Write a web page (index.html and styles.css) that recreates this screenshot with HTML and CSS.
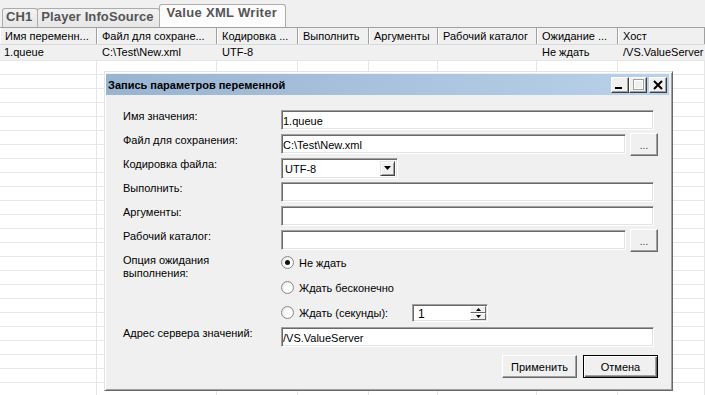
FILE: index.html
```html
<!DOCTYPE html>
<html lang="ru">
<head>
  <meta charset="UTF-8">
  <title>Value XML Writer</title>
  <link rel="stylesheet" href="styles.css">
</head>
<body>
  <div class="app">
    <!-- Tab strip -->
    <div class="tabs">
      <div class="tab">CH1</div>
      <div class="tab">Player InfoSource</div>
      <div class="tab active">Value XML Writer</div>
    </div>

    <!-- Variables grid -->
    <div class="grid">
      <div class="grid-row head">
        <div class="cell">Имя переменн...</div>
        <div class="cell">Файл для сохране...</div>
        <div class="cell">Кодировка ...</div>
        <div class="cell">Выполнить</div>
        <div class="cell">Аргументы</div>
        <div class="cell">Рабочий каталог</div>
        <div class="cell">Ожидание ...</div>
        <div class="cell">Хост</div>
      </div>
      <div class="grid-row data">
        <div class="cell">1.queue</div>
        <div class="cell">C:\Test\New.xml</div>
        <div class="cell">UTF-8</div>
        <div class="cell"></div>
        <div class="cell"></div>
        <div class="cell"></div>
        <div class="cell">Не ждать</div>
        <div class="cell">/VS.ValueServer</div>
      </div>
      <div class="grid-row filler">
        <div class="cell"></div>
        <div class="cell"></div>
        <div class="cell"></div>
        <div class="cell"></div>
        <div class="cell"></div>
        <div class="cell"></div>
        <div class="cell"></div>
        <div class="cell"></div>
      </div>
    </div>

    <!-- Edit dialog -->
    <div class="dialog">
      <div class="titlebar">
        <span class="title">Запись параметров переменной</span>
        <div class="caption-buttons">
          <span class="cap-btn">
            <svg width="16" height="14" viewBox="0 0 16 14"><rect x="3" y="9" width="7" height="2" fill="#000"/></svg>
          </span>
          <span class="cap-btn">
            <svg width="16" height="14" viewBox="0 0 16 14"><rect x="3.5" y="1.5" width="10" height="10" fill="none" stroke="#a0a0a0"/><rect x="4.5" y="2.5" width="8" height="8" fill="none" stroke="#fff"/></svg>
          </span>
          <span class="cap-btn close">
            <svg width="16" height="14" viewBox="0 0 16 14"><path d="M4 3 L12 11 M12 3 L4 11" stroke="#000" stroke-width="2"/></svg>
          </span>
        </div>
      </div>

      <div class="dialog-body">
        <div class="field">
          <label for="val-name">Имя значения:</label>
          <div class="control"><input class="textbox wide" id="val-name" type="text" value="1.queue"></div>
        </div>
        <div class="field">
          <label for="val-file">Файл для сохранения:</label>
          <div class="control">
            <input class="textbox short" id="val-file" type="text" value="C:\Test\New.xml">
            <button class="browse" type="button">...</button>
          </div>
        </div>
        <div class="field">
          <label>Кодировка файла:</label>
          <div class="control">
            <div class="combo">
              <span class="combo-value">UTF-8</span>
              <span class="combo-btn">
                <svg width="7" height="4" viewBox="0 0 7 4"><path d="M0 0 H7 L3.5 4 Z" fill="#000"/></svg>
              </span>
            </div>
          </div>
        </div>
        <div class="field">
          <label for="val-exec">Выполнить:</label>
          <div class="control"><input class="textbox wide" id="val-exec" type="text"></div>
        </div>
        <div class="field">
          <label for="val-args">Аргументы:</label>
          <div class="control"><input class="textbox wide" id="val-args" type="text"></div>
        </div>
        <div class="field">
          <label for="val-dir">Рабочий каталог:</label>
          <div class="control">
            <input class="textbox short" id="val-dir" type="text">
            <button class="browse" type="button">...</button>
          </div>
        </div>
        <div class="field options">
          <label>Опция ожидания<br>выполнения:</label>
          <div class="radios">
            <div class="radio-row"><span class="radio checked"></span><span>Не ждать</span></div>
            <div class="radio-row"><span class="radio"></span><span>Ждать бесконечно</span></div>
            <div class="radio-row">
              <span class="radio"></span><span class="radio-text">Ждать (секунды):</span>
              <div class="spin">
                <span class="spin-value">1</span>
                <span class="spin-btns">
                  <span class="spin-btn"><svg width="5" height="3" viewBox="0 0 5 3"><path d="M0 3 H5 L2.5 0 Z" fill="#000"/></svg></span>
                  <span class="spin-btn"><svg width="5" height="3" viewBox="0 0 5 3"><path d="M0 0 H5 L2.5 3 Z" fill="#000"/></svg></span>
                </span>
              </div>
            </div>
          </div>
        </div>
        <div class="field">
          <label for="val-host">Адрес сервера значений:</label>
          <div class="control"><input class="textbox wide" id="val-host" type="text" value="/VS.ValueServer"></div>
        </div>
        <div class="dialog-buttons">
          <button class="btn" type="button">Применить</button>
          <button class="btn default" type="button">Отмена</button>
        </div>
      </div>
    </div>
  </div>
</body>
</html>
```

FILE: styles.css
```css
body {
  margin: 0;
  font-family: "Liberation Sans", Arial, sans-serif;
  font-size: 11px;
  color: #000;
  background: #fff;
  overflow: hidden;
}
.app {
  position: relative;
  width: 705px;
  height: 395px;
  overflow: hidden;
}

/* Tabs */
.tabs {
  display: flex;
  align-items: flex-end;
  height: 27px;
  padding-left: 2px;
  background: #f0f0f0;
  border-bottom: 1px solid #a0a0a0;
}
.tab {
  height: 18px;
  line-height: 16px;
  padding: 0 5px 0 3px;
  border: 1px solid #acacac;
  border-bottom: none;
  border-radius: 3px 3px 0 0;
  background: linear-gradient(#f2f2f2, #e6e6e6);
  font-size: 13px;
  font-weight: bold;
  letter-spacing: 0.1px;
  color: #555;
}
.tab + .tab {
  margin-left: -1px;
}
.tab.active {
  height: 22px;
  line-height: 15px;
  padding: 0 8px 0 7px;
  letter-spacing: 0.3px;
  background: #fcfcfc;
}

/* Grid */
.grid-row {
  display: grid;
  grid-template-columns: 97px 120px 81px 71px 69px 99px 81px 1fr;
}
.cell {
  padding-left: 5px;
  white-space: nowrap;
  overflow: hidden;
}
.head {
  height: 16px;
  background: #f0f0f0;
  border-bottom: 1px solid #d9d9d9;
}
.head .cell {
  line-height: 16px;
  border-right: 1px solid #a0a0a0;
  box-shadow: inset 1px 0 #fff;
}
.data {
  height: 15px;
  background: #f0f0f0;
  border-bottom: 1px solid #e6e6e6;
}
.data .cell {
  line-height: 15px;
}
.data .cell:first-child {
  padding-left: 4px;
}
.filler {
  height: 340px;
  background: repeating-linear-gradient(#fff 0 13px, #e8e8e8 13px 14px);
}
.filler .cell {
  border-right: 1px solid #e6e6e6;
}

/* Dialog */
.dialog {
  position: absolute;
  left: 104px;
  top: 71px;
  width: 569px;
  height: 320px;
  box-sizing: border-box;
  padding: 2px 3px 2px 1px;
  background: #f0f0f0;
  border: 1px solid;
  border-color: #e3e3e3 #696969 #696969 #e3e3e3;
  box-shadow: inset 1px 1px #fff, inset -1px -1px #a0a0a0;
}
.titlebar {
  display: flex;
  align-items: center;
  justify-content: space-between;
  height: 21px;
  padding: 0 2px 0 2px;
  background: linear-gradient(to right, #99b4d1, #b9d1ea);
}
.title {
  font-weight: bold;
}
.caption-buttons {
  display: flex;
}
.cap-btn {
  display: block;
  width: 16px;
  height: 14px;
  background: #f0f0f0;
  border: 1px solid;
  border-color: #fff #404040 #404040 #fff;
  box-shadow: inset -1px -1px #a0a0a0;
}
.cap-btn svg {
  display: block;
}
.cap-btn.close {
  margin-left: 2px;
}

.dialog-body {
  padding: 13px 0 0 17px;
}
.field {
  display: grid;
  grid-template-columns: 158px 377px;
  height: 24px;
  align-items: center;
}
.field > label {
  align-self: start;
  padding-top: 2px;
  line-height: 13px;
}
.control {
  display: flex;
  align-items: center;
  gap: 4px;
}
.textbox {
  height: 20px;
  box-sizing: border-box;
  margin: 0;
  padding: 1px 0 0 1px;
  border: 1px solid;
  border-color: #a0a0a0 #fff #fff #a0a0a0;
  box-shadow: inset 1px 1px #696969, inset -1px -1px #e3e3e3;
  background: #fff;
  font: inherit;
  color: #000;
  outline: none;
}
.textbox.wide {
  width: 373px;
}
.textbox.short {
  width: 345px;
}
.browse {
  width: 28px;
  height: 23px;
  margin: 0;
  padding: 2px 0 0;
  border: 1px solid;
  border-color: #fff #696969 #696969 #fff;
  box-shadow: inset -1px -1px #a0a0a0;
  background: #f0f0f0;
  font: inherit;
  font-size: 10px;
  color: #4a2a6a;
}

.combo {
  display: flex;
  width: 117px;
  height: 21px;
  box-sizing: border-box;
  border: 1px solid;
  border-color: #a0a0a0 #fff #fff #a0a0a0;
  box-shadow: inset 1px 1px #696969, inset -1px -1px #e3e3e3;
  background: #fff;
  padding: 2px 2px 2px 2px;
}
.combo-value {
  flex: 1;
  line-height: 16px;
  padding-left: 1px;
}
.combo-btn {
  display: flex;
  align-items: center;
  justify-content: center;
  width: 15px;
  box-sizing: border-box;
  background: #f0f0f0;
  border: 1px solid;
  border-color: #e3e3e3 #404040 #404040 #e3e3e3;
  box-shadow: inset 1px 1px #fff, inset -1px -1px #a0a0a0;
}

/* Radio group */
.field.options {
  height: 75px;
  margin-top: -2px;
}
.field.options > label {
  padding-top: 4px;
}
.radios {
  align-self: start;
}
.radio-row {
  display: flex;
  align-items: center;
  height: 25px;
}
.radio {
  position: relative;
  width: 11px;
  height: 11px;
  margin-right: 5px;
  border: 1px solid #8a8a8a;
  border-radius: 50%;
  background: radial-gradient(circle at 60% 60%, #fff 30%, #dcdcdc 100%);
}
.radio.checked::after {
  content: "";
  position: absolute;
  left: 3px;
  top: 3px;
  width: 5px;
  height: 5px;
  border-radius: 50%;
  background: #111;
}
.radio-text {
  width: 113px;
}
.spin {
  display: flex;
  width: 76px;
  height: 18px;
  box-sizing: border-box;
  border: 1px solid;
  border-color: #a0a0a0 #fff #fff #a0a0a0;
  box-shadow: inset 1px 1px #696969, inset -1px -1px #e3e3e3;
  background: #fff;
  padding: 1px 1px 1px 2px;
}
.spin-value {
  flex: 1;
  line-height: 16px;
  padding-left: 3px;
  font-size: 12px;
}
.spin-btns {
  display: flex;
  flex-direction: column;
  width: 16px;
}
.spin-btn {
  display: flex;
  align-items: center;
  justify-content: center;
  flex: 1;
  background: #f0f0f0;
  border: 1px solid;
  border-color: #fff #696969 #696969 #fff;
}

/* Buttons */
.dialog-buttons {
  display: flex;
  justify-content: flex-end;
  gap: 6px;
  width: 535px;
  margin-top: 6px;
}
.btn {
  width: 75px;
  height: 23px;
  margin: 0;
  padding: 0;
  border: 1px solid;
  border-color: #fff #696969 #696969 #fff;
  box-shadow: inset -1px -1px #a0a0a0;
  background: #f0f0f0;
  font: inherit;
  color: #000;
}
.btn.default {
  border: 1px solid #000;
  box-shadow: inset 1px 1px #fff, inset -1px -1px #696969, inset -2px -2px #a0a0a0;
}
```
